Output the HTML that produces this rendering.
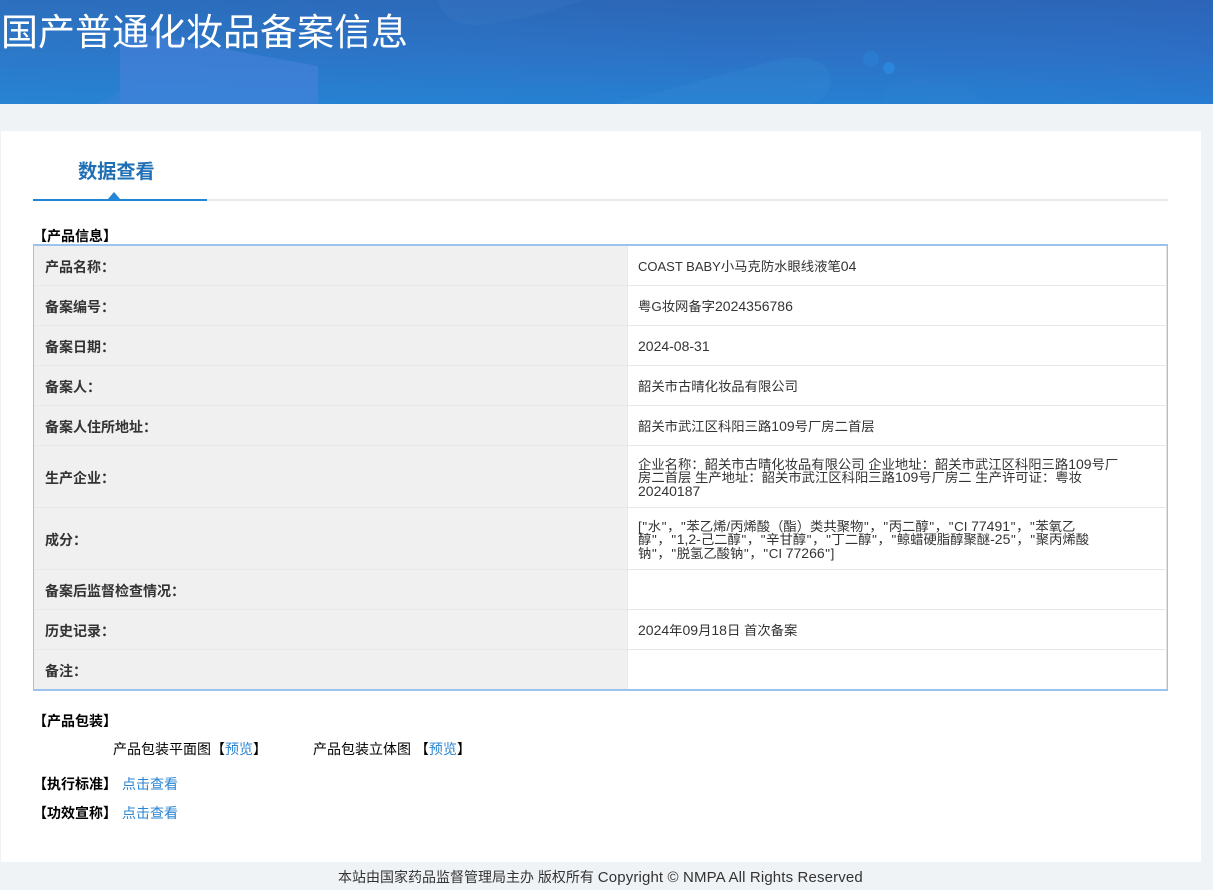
<!DOCTYPE html>
<html lang="zh"><head><meta charset="utf-8"><title>国产普通化妆品备案信息</title>
<style>
*{box-sizing:border-box}
html,body{margin:0;padding:0}
body{width:1213px;height:890px;position:relative;overflow:hidden;background:#eff3f6;font-family:"Liberation Sans","Noto Sans CJK SC",sans-serif;font-size:13.33px;color:#333}
.a{position:absolute;white-space:nowrap}
#hd{left:0;top:0;width:1213px;height:104px;background:linear-gradient(180deg,#2c65b6 0%,#2c72c6 55%,#2680d2 100%);overflow:hidden}
#hd svg{position:absolute;left:0;top:0}
h1{position:absolute;left:1px;top:9px;margin:0;font-size:37px;line-height:48px;font-weight:400;color:#fff;white-space:nowrap}
#card{left:1px;top:131px;width:1200px;height:731px;background:#fff}
.row{position:absolute;left:34px;width:1133px;border-bottom:1px solid #e8e8e8}
.l{position:absolute;left:0;top:0;bottom:0;width:594px;background:#f0f0f0;border-right:1px solid #e8e8e8;font-size:14px;font-weight:700;padding:3px 0 0 11px;display:flex;align-items:center;color:#333}
.r{position:absolute;left:594px;top:0;bottom:0;right:0;background:#fff;border-right:1px solid #dfe3e6;padding:2px 10px 0 10px;display:flex;align-items:center;line-height:13.5px;color:#333;white-space:nowrap}
.m{margin-top:1px}
.b{font-weight:700;color:#000;font-size:14px}
.k{color:#000;font-size:14px}
.lk{color:#2a84d2}
.a.lk{font-size:14px}
.d{font-style:normal;font-size:14px}
.c{font-size:13px}
.q{padding:0 .65px}
</style></head><body>
<div class="a" id="hd">
<svg width="1213" height="104" viewBox="0 0 1213 104">
<defs><linearGradient id="g" x1="0" x2="1" y1="0" y2="0"><stop offset="0" stop-color="#2a92d8" stop-opacity=".22"/><stop offset=".6" stop-color="#2a92d8" stop-opacity="0"/><stop offset="1" stop-color="#2a5cc8" stop-opacity=".12"/></linearGradient></defs>
<rect width="1213" height="104" fill="url(#g)"/>
<path d="M437 0C442 16 458 27 480 25C510 22 550 12 584 0Z" fill="#4a8ad0" fill-opacity=".16"/>
<path d="M120 30L318 66V104H120Z" fill="#4a84dc" fill-opacity=".55"/>
<path d="M98 104L120 92V104Z" fill="#4a84dc" fill-opacity=".3"/>
<path d="M614 104L770 62C800 52 831 60 831 80C831 92 822 100 812 104Z" fill="#3a90d6" fill-opacity=".22"/>
<circle cx="871" cy="59" r="8" fill="#2b80d4" fill-opacity=".7"/>
<circle cx="889" cy="68" r="6" fill="#2c8ae0" fill-opacity=".8"/>
<path d="M880 104L888 84C920 76 966 78 977 94V104Z" fill="#3a88d8" fill-opacity=".14"/>
</svg>
<h1>国产普通化妆品备案信息</h1>
</div>
<div class="a" id="card"></div>

<div class="a" style="left:78px;top:160px;font-size:19.2px;line-height:26px;font-weight:700;color:#1f6fb5">数据查看</div>
<div class="a" style="left:33px;top:199px;width:1135px;height:2px;background:#e7e9ec"></div>
<div class="a" style="left:33px;top:199px;width:174px;height:2px;background:#2385d6"></div>
<div class="a" style="left:108px;top:192px;width:0;height:0;border-left:6.5px solid transparent;border-right:6.5px solid transparent;border-bottom:7px solid #2385d6"></div>

<div class="a b" style="left:33px;top:228px;line-height:16px">【产品信息】</div>
<div class="a" style="left:33px;top:244px;width:1135px;height:447px;border-style:solid;border-color:#9cc3ee;border-width:2px 1px 2px 1px;background:#fff"></div>

<div class="row" style="top:246px;height:40px"><div class="l">产品名称&#65306;</div><div class="r"><div><span class="c">COAST BABY</span>小马克防水眼线液笔<i class="d">04</i></div></div></div>
<div class="row" style="top:286px;height:40px"><div class="l">备案编号&#65306;</div><div class="r"><div>粤G妆网备字<i class="d">2024356786</i></div></div></div>
<div class="row" style="top:326px;height:40px"><div class="l">备案日期&#65306;</div><div class="r"><div><i class="d">2024-08-31</i></div></div></div>
<div class="row" style="top:366px;height:40px"><div class="l">备案人&#65306;</div><div class="r">韶关市古晴化妆品有限公司</div></div>
<div class="row" style="top:406px;height:40px"><div class="l">备案人住所地址&#65306;</div><div class="r"><div>韶关市武江区科阳三路<i class="d">109</i>号厂房二首层</div></div></div>
<div class="row" style="top:446px;height:62px"><div class="l">生产企业&#65306;</div><div class="r"><div class="m">企业名称&#65306;韶关市古晴化妆品有限公司 企业地址&#65306;韶关市武江区科阳三路<i class="d">109</i>号厂<br>房二首层 生产地址&#65306;韶关市武江区科阳三路<i class="d">109</i>号厂房二 生产许可证&#65306;粤妆<br><i class="d">20240187</i></div></div></div>
<div class="row" style="top:508px;height:62px"><div class="l">成分&#65306;</div><div class="r"><div class="m">[<span class="q">"</span>水<span class="q">"</span>&#65292;<span class="q">"</span>苯乙烯/丙烯酸&#65288;酯&#65289;类共聚物<span class="q">"</span>&#65292;<span class="q">"</span>丙二醇<span class="q">"</span>&#65292;<span class="q">"</span>CI <i class="d">77491</i><span class="q">"</span>&#65292;<span class="q">"</span>苯氧乙<br>醇<span class="q">"</span>&#65292;<span class="q">"</span><i class="d">1,2-</i>己二醇<span class="q">"</span>&#65292;<span class="q">"</span>辛甘醇<span class="q">"</span>&#65292;<span class="q">"</span>丁二醇<span class="q">"</span>&#65292;<span class="q">"</span>鲸蜡硬脂醇聚醚<i class="d">-25</i><span class="q">"</span>&#65292;<span class="q">"</span>聚丙烯酸<br>钠<span class="q">"</span>&#65292;<span class="q">"</span>脱氢乙酸钠<span class="q">"</span>&#65292;<span class="q">"</span>CI <i class="d">77266</i><span class="q">"</span>]</div></div></div>
<div class="row" style="top:570px;height:40px"><div class="l">备案后监督检查情况&#65306;</div><div class="r"></div></div>
<div class="row" style="top:610px;height:40px"><div class="l">历史记录&#65306;</div><div class="r"><div><i class="d">2024</i>年<i class="d">09</i>月<i class="d">18</i>日 首次备案</div></div></div>
<div class="row" style="top:650px;height:39px;border-bottom:0"><div class="l">备注&#65306;</div><div class="r"></div></div>

<div class="a b" style="left:33px;top:713px;line-height:16px">【产品包装】</div>
<div class="a k" style="left:113px;top:741px;line-height:16px">产品包装平面图【<span class="lk">预览</span>】</div>
<div class="a k" style="left:313px;top:741px;line-height:16px">产品包装立体图 【<span class="lk">预览</span>】</div>
<div class="a b" style="left:33px;top:776px;line-height:16px">【执行标准】</div>
<div class="a lk" style="left:122px;top:776px;line-height:16px">点击查看</div>
<div class="a b" style="left:33px;top:805px;line-height:16px">【功效宣称】</div>
<div class="a lk" style="left:122px;top:805px;line-height:16px">点击查看</div>

<div class="a" style="left:338px;top:868px;font-size:14px;line-height:18px;color:#333">本站由国家药品监督管理局主办 版权所有 <span style="font-size:15px;letter-spacing:.14px">Copyright © NMPA All Rights Reserved</span></div>
</body></html>
